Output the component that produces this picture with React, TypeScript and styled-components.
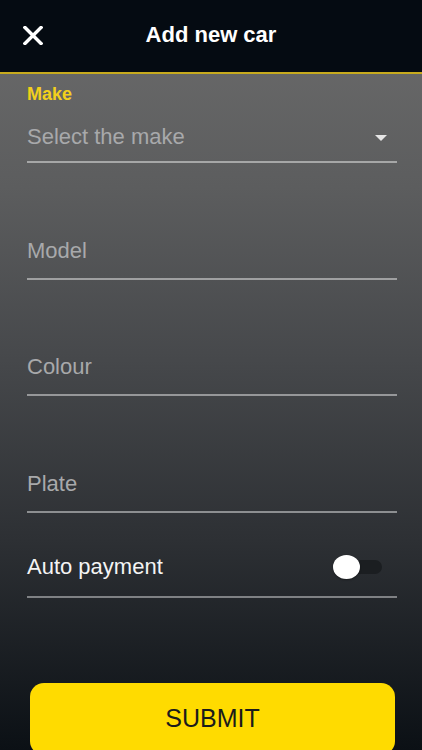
import React, { useState } from "react";
import styled, { createGlobalStyle } from "styled-components";

const GlobalStyle = createGlobalStyle`
  html, body {
    margin: 0;
    padding: 0;
    background: #0b1015;
    overflow: hidden;
  }
  body {
    font-family: "Liberation Sans", Arial, sans-serif;
  }
`;

const FIELDS = ["Model", "Colour", "Plate"];

const App: React.FC = () => {
  const [autoPay, setAutoPay] = useState(false);

  return (
    <>
      <GlobalStyle />
      <Screen>
        <Header>
          <CloseButton aria-label="Close">
            <svg width="20" height="19" viewBox="0 0 20 19">
              <path
                d="M2 1.5 L18 17.5 M18 1.5 L2 17.5"
                stroke="#fff"
                strokeWidth="3.4"
                strokeLinecap="square"
                fill="none"
              />
            </svg>
          </CloseButton>
          <Title>Add new car</Title>
          <span />
        </Header>

        <Form>
          <MakeField>
            <FieldLabel>Make</FieldLabel>
            <SelectRow>
              <Placeholder>Select the make</Placeholder>
              <Caret />
            </SelectRow>
          </MakeField>

          {FIELDS.map((name) => (
            <TextField key={name}>
              <Placeholder>{name}</Placeholder>
            </TextField>
          ))}

          <SwitchField>
            <SwitchRow>
              <SwitchLabel>Auto payment</SwitchLabel>
              <Track $on={autoPay} onClick={() => setAutoPay(!autoPay)}>
                <Knob $on={autoPay} />
              </Track>
            </SwitchRow>
          </SwitchField>

          <SubmitButton>SUBMIT</SubmitButton>
        </Form>
      </Screen>
    </>
  );
};

export default App;

const Screen = styled.div`
  width: 100%;
  height: 750px;
  display: flex;
  flex-direction: column;
  overflow: hidden;
  background: linear-gradient(
    180deg,
    #6c6c6c 0%,
    #5c5d5e 25%,
    #46484b 48%,
    #2d3034 72%,
    #0b1015 100%
  );
`;

const Header = styled.header`
  height: 74px;
  flex-shrink: 0;
  box-sizing: border-box;
  display: grid;
  grid-template-columns: 1fr auto 1fr;
  align-items: center;
  padding-bottom: 2px;
  background: #050b12;
  border-bottom: 2px solid #c8ab1e;
`;

const CloseButton = styled.button`
  justify-self: start;
  display: flex;
  align-items: center;
  background: none;
  border: none;
  padding: 0 0 0 23px;
  margin: 0;
  cursor: pointer;
`;

const Title = styled.h1`
  margin: 0;
  font-size: 22px;
  line-height: 26px;
  font-weight: 700;
  color: #ffffff;
`;

const Form = styled.div`
  display: flex;
  flex-direction: column;
  padding: 10px 25px 0 27px;
`;

const MakeField = styled.div`
  display: flex;
  flex-direction: column;
`;

const FieldLabel = styled.label`
  font-size: 18px;
  line-height: 20px;
  font-weight: 700;
  color: #f2d01c;
  margin-bottom: 20px;
`;

const SelectRow = styled.div`
  display: flex;
  align-items: center;
  justify-content: space-between;
  padding-bottom: 11px;
  border-bottom: 2px solid rgba(255, 255, 255, 0.45);
`;

const Placeholder = styled.span`
  font-size: 22px;
  line-height: 26px;
  color: #a8a9ab;
`;

const Caret = styled.span`
  width: 0;
  height: 0;
  margin-right: 10px;
  margin-top: 2px;
  border-left: 6px solid transparent;
  border-right: 6px solid transparent;
  border-top: 6px solid #e6e6e6;
`;

const TextField = styled.div`
  height: 116.67px;
  box-sizing: border-box;
  display: flex;
  align-items: flex-end;
  padding-bottom: 14px;
  border-bottom: 2px solid rgba(255, 255, 255, 0.45);
`;

const SwitchField = styled.div`
  height: 85px;
  box-sizing: border-box;
  display: flex;
  align-items: flex-end;
  padding-bottom: 16px;
  border-bottom: 2px solid rgba(255, 255, 255, 0.42);
`;

const SwitchRow = styled.div`
  flex: 1;
  display: flex;
  align-items: center;
  justify-content: space-between;
`;

const SwitchLabel = styled.span`
  font-size: 22px;
  line-height: 26px;
  color: #f4f4f4;
`;

const Track = styled.div<{ $on: boolean }>`
  position: relative;
  width: 42px;
  height: 14px;
  margin-right: 15px;
  border-radius: 7px;
  background: ${({ $on }) => ($on ? "#8a7a1a" : "#1b1e21")};
  cursor: pointer;
`;

const Knob = styled.span<{ $on: boolean }>`
  position: absolute;
  top: 50%;
  left: ${({ $on }) => ($on ? "22px" : "-7px")};
  width: 27px;
  height: 24px;
  margin-top: -12px;
  border-radius: 50%;
  background: ${({ $on }) => ($on ? "#ffdb00" : "#ffffff")};
  box-shadow: 0 1px 2px rgba(0, 0, 0, 0.35);
`;

const SubmitButton = styled.button`
  margin: 85px 2px 0 3px;
  height: 72px;
  flex-shrink: 0;
  border: none;
  border-radius: 14px;
  background: #ffdb00;
  color: #1b1b1b;
  font-family: "Liberation Sans", Arial, sans-serif;
  font-size: 25px;
  font-weight: 400;
  cursor: pointer;
`;
